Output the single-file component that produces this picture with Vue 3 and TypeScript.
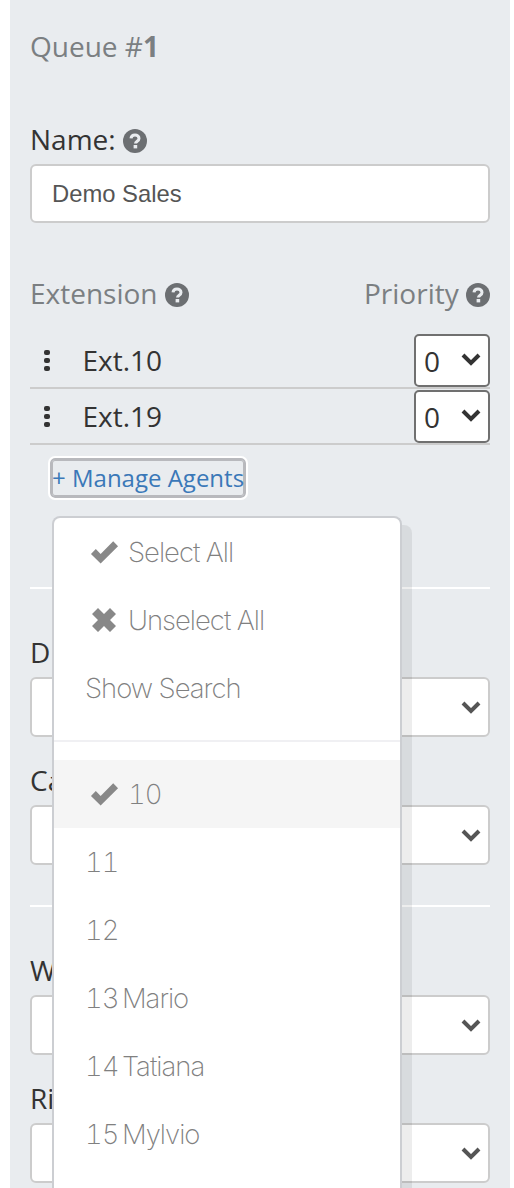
<template>
  <div class="page">
    <div class="queue-panel">
      <h2 class="queue-title">Queue #<strong>1</strong></h2>

      <label class="field-label name-label">Name:
        <svg class="help" viewBox="0 0 24 24"><use href="#help-icon" /></svg>
      </label>
      <input class="text-input" type="text" value="Demo Sales" readonly />

      <div class="ext-head">
        <span>Extension <svg class="help" viewBox="0 0 24 24"><use href="#help-icon" /></svg></span>
        <span>Priority <svg class="help" viewBox="0 0 24 24"><use href="#help-icon" /></svg></span>
      </div>

      <div v-for="ext in extensions" :key="ext" class="ext-row">
        <span class="dots"><i /><i /><i /></span>
        <span class="ext-name">Ext.{{ ext }}</span>
        <div class="priority">
          <span>0</span>
          <svg class="chevron dark" viewBox="0 0 20 14"><path d="M2 3l8 8 8-8" /></svg>
        </div>
      </div>

      <div class="manage-wrap">
        <button class="manage-btn" type="button">+ Manage Agents</button>
        <div class="agents-menu">
          <div class="menu-item">
            <svg class="menu-icon" viewBox="0 0 30 24"><path d="M1 14l5-5 5 5L24 1l5 5-18 18z" /></svg>Select All
          </div>
          <div class="menu-item">
            <svg class="menu-icon x" viewBox="0 0 24 24"><path d="M6 0l6 6 6-6 6 6-6 6 6 6-6 6-6-6-6 6-6-6 6-6-6-6z" /></svg>Unselect All
          </div>
          <div class="menu-item plain">Show Search</div>
          <div class="menu-sep" />
          <div class="menu-item active">
            <svg class="menu-icon" viewBox="0 0 30 24"><path d="M1 14l5-5 5 5L24 1l5 5-18 18z" /></svg>10
          </div>
          <div v-for="agent in agents" :key="agent" class="menu-item plain agent">{{ agent }}</div>
        </div>
      </div>

      <hr class="rule first-rule" />

      <div v-for="f in firstGroup" :key="f" class="select-field">
        <div class="field-label">{{ f }}</div>
        <div class="select-box">
          <svg class="chevron" viewBox="0 0 20 14"><path d="M2 3l8 8 8-8" /></svg>
        </div>
      </div>

      <hr class="rule second-rule" />

      <div v-for="f in secondGroup" :key="f" class="select-field">
        <div class="field-label">{{ f }}</div>
        <div class="select-box">
          <svg class="chevron" viewBox="0 0 20 14"><path d="M2 3l8 8 8-8" /></svg>
        </div>
      </div>
    </div>

    <svg width="0" height="0" class="defs">
      <symbol id="help-icon" viewBox="0 0 24 24">
        <circle cx="12" cy="12" r="12" fill="currentColor" />
        <path d="M8 9.4c.2-2.2 1.9-3.4 4-3.4 2.2 0 4 1.3 4 3.4 0 2.8-3.5 2.7-3.5 5.1" fill="none" stroke="#e9ecef" stroke-width="3" />
        <rect x="10.6" y="16" width="3.6" height="3.4" fill="#e9ecef" />
      </symbol>
    </svg>
  </div>
</template>

<script setup lang="ts">
const extensions: number[] = [10, 19]
const agents: string[] = ['11', '12', '13 Mario', '14 Tatiana', '15 Mylvio']
const firstGroup: string[] = ['D Type', 'Call']
const secondGroup: string[] = ['Wait', 'Ring']
</script>

<style>
html, body { margin: 0; background: #fff; }
</style>

<style scoped>
.page { height: 1188px; overflow: hidden; padding: 0 4px 0 10px; font-family: "Open Sans", "Liberation Sans", sans-serif; }
.defs { position: absolute; }
.queue-panel { height: 1188px; box-sizing: border-box; padding: 0 20px; background: #e9ecef; color: #333; }
.queue-title { margin: 0; padding-top: 29px; height: 74px; box-sizing: border-box; font-size: 28px; line-height: 34px; font-weight: 400; color: #7b7f82; }
.queue-title strong { font-weight: 700; }
.field-label { font-size: 28px; line-height: 34px; color: #333; white-space: nowrap; }
.name-label { display: block; margin-top: 48px; }
.help { width: 24px; height: 24px; color: #6c6f72; vertical-align: -3px; margin-left: 0; }
.text-input { display: block; box-sizing: border-box; width: 100%; height: 59px; margin-top: 8px; padding: 0 20px; border: 2px solid #ccc; border-radius: 6px; background: #fff; font-family: "Liberation Sans", Arial, sans-serif; font-size: 23.8px; color: #555; outline: none; }
.ext-head { display: flex; justify-content: space-between; margin-top: 53px; height: 57px; font-size: 28px; line-height: 34px; color: #7b7f82; }
.ext-row { display: flex; align-items: center; height: 56px; box-sizing: border-box; border-bottom: 2px solid #ccc; color: #333; font-size: 28px; }
.dots { display: flex; flex-direction: column; gap: 3px; width: 52.5px; padding-left: 14px; box-sizing: border-box; }
.dots i { display: block; width: 6px; height: 5px; border-radius: 2px; background: #333; }
.ext-name { flex: 1; }
.priority { display: flex; align-items: center; justify-content: space-between; box-sizing: border-box; width: 76px; height: 53px; margin-top: 1px; padding: 0 7px 0 8px; border: 2px solid #707070; border-radius: 5px; background: #fff; }
.chevron { width: 20px; height: 14px; fill: none; stroke: #555; stroke-width: 4; }
.chevron.dark { stroke: #333; margin-bottom: 4px; }
.manage-wrap { position: relative; margin-top: 13px; height: 41px; }
.manage-btn { display: block; box-sizing: border-box; width: 196px; height: 40px; margin-left: 20px; padding: 0; border: 2px solid #b8b9bd; border-radius: 5px; outline: 2px solid #fff; box-shadow: inset 0 0 0 1px #b8b9bd; background: none; color: #3a78b8; font-family: inherit; font-size: 24px; line-height: 34px; white-space: nowrap; }
.agents-menu { position: absolute; top: 58px; left: 22px; width: 350px; height: 700px; box-sizing: border-box; border: 2px solid #ccced2; border-bottom: 0; border-radius: 8px 8px 0 0; background: #fff; box-shadow: 10px 9px 0 rgba(0, 0, 0, .07); font-family: Inter, "Liberation Sans", sans-serif; font-weight: 200; font-size: 27.5px; letter-spacing: -1px; font-variant-numeric: tabular-nums; color: #808080; z-index: 2; }
.menu-item { display: flex; align-items: center; height: 68px; padding-left: 36px; white-space: nowrap; }
.menu-item.plain { padding-left: 31px; }
.menu-item.agent { padding-left: 31px; word-spacing: -3px; }
.menu-icon { width: 29px; height: 24px; margin-right: 9px; fill: #888; flex: none; }
.menu-icon.x { width: 24px; margin: 0 12px 0 2px; }
.menu-sep { height: 2px; margin: 18px 0 18px; background: #f0f0f3; }
.menu-item.active { background: #f5f5f5; }
.rule { height: 2px; margin: 0; border: 0; background: #fff; }
.first-rule { margin-top: 88px; margin-bottom: 46px; }
.second-rule { margin-top: 40px; margin-bottom: 46px; }
.select-field { margin-bottom: 26px; }
.select-field:last-of-type { margin-bottom: 0; }
.select-box { display: flex; align-items: center; justify-content: flex-end; box-sizing: border-box; height: 60px; margin-top: 8px; padding-right: 7px; border: 2px solid #ccc; border-radius: 6px; background: #fff; }
</style>
